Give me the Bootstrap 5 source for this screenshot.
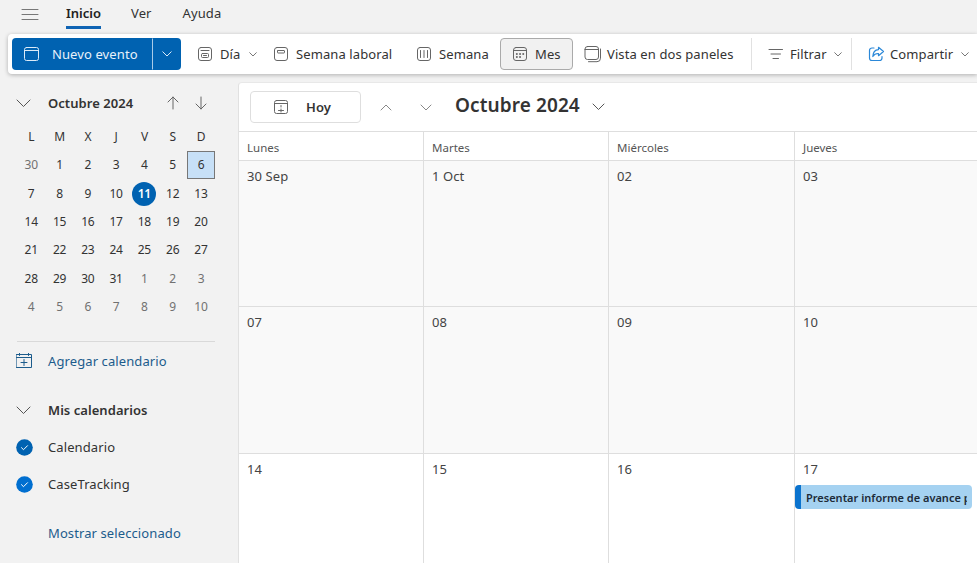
<!DOCTYPE html>
<html lang="es">
<head>
<meta charset="utf-8">
<meta name="viewport" content="width=device-width, initial-scale=1">
<title>Calendario</title>
<link href="https://cdn.jsdelivr.net/npm/bootstrap@5.3.0/dist/css/bootstrap.min.css" rel="stylesheet">
<style>
  body { font-family: "Noto Sans", "Open Sans", sans-serif; font-size: 13px; line-height: 20px; letter-spacing: .1px; color: #333; background: #f2f2f2; height: 563px; overflow: hidden; }
  svg { display: block; flex: none; fill: none; stroke: currentColor; stroke-linecap: round; stroke-linejoin: round; }
  button { color: inherit; letter-spacing: inherit; }
  .tabs { height: 34px; padding-left: 21px; }
  .menu-icon { width: 45px; color: #777; padding-top: 8px; }
  .tab { height: 29px; padding-top: 3px; }
  .tab-on { width: 35px; border-bottom: 3px solid #0f64b4; color: #222; letter-spacing: 0; }
  .tab-ver { margin-left: 30px; }
  .tab-ayuda { margin-left: 31px; }
  .ribbon { height: 40px; margin-left: 8px; padding: 4px 0 4px 4px; border-radius: 4px 0 0 4px; box-shadow: 0 1px 4px rgba(0,0,0,.28); }
  .tool { height: 32px; border: 1px solid transparent; border-radius: 4px; background: none; padding: 0 0 0 7px; display: flex; align-items: center; white-space: nowrap; flex: none; text-align: left; }
  .tool svg { color: #666; }
  .tool > span { margin-left: 7px; }
  .tool .chev { margin-left: 9px; color: #777; }
  .tool-main { width: 140px; padding-left: 11px; background: #0062b1; color: #e8f1fa; border-radius: 4px 0 0 4px; }
  .tool-main > span { margin-left: 12px; }
  .tool-main svg, .tool-split svg { color: #dcebf8; }
  .tool-split { width: 29px; background: #0062b1; border-left-color: #a9cbe8; border-radius: 0 4px 4px 0; padding-left: 9px; }
  .tool-day { width: 76px; }
  .tool-work { width: 143px; }
  .tool-week { width: 92px; }
  .tool-on { width: 73px; padding-left: 11px; border-color: #aaa; background: #f1f1f1; }
  .tool-panes { width: 178px; padding-left: 10px; }
  .tool-panes > span { margin-left: 5px; }
  .tool-filter { width: 99px; padding-left: 15px; }
  .tool-filter > span { margin-left: 6px; }
  .tool-filter .chev { margin-left: 7px; }
  .tool-share { padding-left: 15px; }
  .tool-share > span { margin-left: 5px; }
  .tool-share .chev { margin-left: 8px; }
  .tool .share-icon { color: #2b88d8; }
  .rule { width: 1px; background: #e1e1e1; height: 32px; flex: none; }
  .side { width: 238px; padding: 19px 23px 0 16px; flex: none; }
  .mini { display: grid; grid-template-columns: repeat(7, 28.3px); grid-auto-rows: 28.3px; font-size: 12px; margin: 10px 0 0 1px; justify-items: center; align-items: center; letter-spacing: -.3px; }
  .mini .out { color: #717171; }
  .mini .picked { width: 28px; height: 28px; border: 1px solid #777; background: #c7e0f7; line-height: 26px; text-align: center; }
  .mini .now { width: 24px; height: 24px; border-radius: 50%; background: #0062b1; color: #fff; font-weight: 600; line-height: 24px; text-align: center; }
  .side-line { height: 1px; background: #d9d9d9; margin: 20px 0 0 1px; }
  .side-row { display: flex; align-items: center; height: 20px; }
  .side-row > span:first-child { width: 32px; flex: none; }
  .side-row.fw-semibold { letter-spacing: .05px; }
  .row-add { margin-top: 9px; }
  .row-group { margin-top: 29px; }
  .row-cal { margin-top: 17px; }
  .row-more { margin-top: 29px; }
  .arrow-up { margin-right: 16px; }
  .arrow-down { margin-right: 8px; }
  .dim { color: #666; }
  .blue { color: #1c5c8c; }
  .board { margin-top: 8px; border-left: 1px solid #e1e1e1; border-top: 1px solid #e8e8e8; border-radius: 4px 0 0 0; min-width: 0; min-height: 0; overflow: hidden; }
  .board-head { height: 48px; padding-left: 11px; flex: none; }
  .today-btn { width: 111px; height: 32px; border: 1px solid #dedede; border-radius: 4px; background: #fff; padding: 0 0 0 23px; font-weight: 600; }
  .today-btn > span { margin-left: 18px; }
  .prev-month { margin-left: 19px; }
  .next-month { margin-left: 28px; }
  .title { font-size: 19px; font-weight: 600; line-height: 26px; width: 137px; white-space: nowrap; margin: 0 0 4px 23px; }
  .month { display: grid; grid-template-columns: 185px 185px 186px 186px; grid-template-rows: 29px 146px 147px minmax(0, 1fr); flex: 1; min-height: 0; overflow: hidden; }
  .month > div { border-top: 1px solid #dedede; border-right: 1px solid #dedede; padding: 5px 0 0 8px; color: #444; white-space: nowrap; }
  .month .head { font-size: 11.5px; padding-top: 6px; color: #555; letter-spacing: 0; }
  .month .past { background: #f9f9f9; }
  .event { width: 177px; height: 24px; margin: 6px 0 0 -8px; border-left: 6px solid #0b73ce; border-radius: 4px; background: #a5d2f1; color: #1d2b38; font-size: 11px; font-weight: 600; line-height: 25px; padding: 0 4px 0 5px; letter-spacing: 0; }
  .event > div { overflow: hidden; width: 161px; }
</style>
</head>
<body class="d-flex flex-column">
<nav class="tabs d-flex flex-shrink-0">
  <span class="menu-icon"><svg width="18" height="13" viewBox="0 0 18 13"><path d="M1 1.500h16M1 6.500h16M1 11.500h16"/></svg></span>
  <span class="tab tab-on fw-semibold">Inicio</span>
  <span class="tab tab-ver">Ver</span>
  <span class="tab tab-ayuda">Ayuda</span>
</nav>

<div class="ribbon d-flex flex-shrink-0 bg-white">
  <button class="tool tool-main"><svg width="16" height="16" viewBox="0 0 16 16"><rect x=".5" y="1.500" width="14" height="13" rx="2"/><path d="M.5 4.500h14"/></svg><span>Nuevo evento</span></button>
  <button class="tool tool-split"><svg width="10" height="6" viewBox="0 0 10 6"><path d="M.8.8 5 5 9.200.8"/></svg></button>
  <button class="tool tool-day ms-2"><svg width="16" height="16" viewBox="0 0 16 16"><rect x="1.500" y="1.500" width="13" height="13" rx="2.500"/><path d="M4 4.500h8"/><rect x="4.500" y="7.500" width="7" height="4" rx="1"/><path d="M6.500 9.500h3"/></svg><span>Día</span><svg class="chev" width="8" height="5" viewBox="0 0 8 5"><path d="M.7.7 4 4 7.300.7"/></svg></button>
  <button class="tool tool-work"><svg width="16" height="16" viewBox="0 0 16 16"><rect x="1.500" y="1.500" width="13" height="13" rx="2.500"/><rect x="4.500" y="4.500" width="7" height="2.500" rx=".5"/></svg><span>Semana laboral</span></button>
  <button class="tool tool-week"><svg width="16" height="16" viewBox="0 0 16 16"><rect x="1.500" y="1.500" width="13" height="13" rx="2.500"/><path d="M4.500 4.500v7M8 4.500v7M11.500 4.500v7"/></svg><span>Semana</span></button>
  <button class="tool tool-on"><svg width="16" height="16" viewBox="0 0 16 16"><rect x="1.500" y="1.500" width="13" height="13" rx="2.500"/><path d="M1.500 4.500h13"/><path d="M4.800 8h.1M8 8h.1M11.200 8h.1M4.800 11h.1M8 11h.1" stroke-width="1.900"/></svg><span>Mes</span></button>
  <button class="tool tool-panes"><svg width="18" height="18" viewBox="0 0 18 18"><rect x="1" y="1.500" width="13.500" height="13" rx="2.500"/><path d="M1 4.500h13.500M4.500 16.700h8.500a3.500 3.500 0 0 0 3.500-3.500V4"/></svg><span>Vista en dos paneles</span></button>
  <span class="rule"></span>
  <button class="tool tool-filter"><svg width="16" height="12" viewBox="0 0 16 12"><path d="M1 1.500h13.500M3 6h9.500M5 10.500h5.500"/></svg><span>Filtrar</span><svg class="chev" width="8" height="5" viewBox="0 0 8 5"><path d="M.7.7 4 4 7.300.7"/></svg></button>
  <span class="rule"></span>
  <button class="tool tool-share"><svg class="share-icon" width="17" height="16" viewBox="0 0 17 16"><path d="M6 2H4a2.500 2.500 0 0 0-2.500 2.500v7.500A2.500 2.500 0 0 0 4 14.500h7.500A2.500 2.500 0 0 0 14 12v-1.500M10.500 1.300l5 4.200-5 4.200V7.500C7.500 7.300 6 8.500 4.800 10.500 5 6.500 7 3.800 10.500 3.600z" stroke-width="1.200"/></svg><span>Compartir</span><svg class="chev" width="8" height="5" viewBox="0 0 8 5"><path d="M.7.7 4 4 7.300.7"/></svg></button>
</div>

<main class="d-flex flex-grow-1 overflow-hidden">
  <aside class="side">
    <div class="side-row fw-semibold"><span><svg width="15" height="9" viewBox="0 0 15 9" color="#555"><path d="M1 1l6.500 6.500L14 1"/></svg></span><span class="flex-grow-1">Octubre 2024</span>
      <svg class="arrow-up dim" width="12" height="14" viewBox="0 0 12 14"><path d="M6 13V1M1 6l5-5 5 5"/></svg><svg class="arrow-down dim" width="12" height="14" viewBox="0 0 12 14"><path d="M6 1v12M1 8l5 5 5-5"/></svg></div>
    <div class="mini">
      <span>L</span><span>M</span><span>X</span><span>J</span><span>V</span><span>S</span><span>D</span>
      <span class="out">30</span><span>1</span><span>2</span><span>3</span><span>4</span><span>5</span><span class="picked">6</span>
      <span>7</span><span>8</span><span>9</span><span>10</span><span class="now">11</span><span>12</span><span>13</span>
      <span>14</span><span>15</span><span>16</span><span>17</span><span>18</span><span>19</span><span>20</span>
      <span>21</span><span>22</span><span>23</span><span>24</span><span>25</span><span>26</span><span>27</span>
      <span>28</span><span>29</span><span>30</span><span>31</span><span class="out">1</span><span class="out">2</span><span class="out">3</span>
      <span class="out">4</span><span class="out">5</span><span class="out">6</span><span class="out">7</span><span class="out">8</span><span class="out">9</span><span class="out">10</span>
    </div>
    <div class="side-line"></div>
    <div class="side-row row-add blue"><span><svg width="17" height="16" viewBox="0 0 17 16"><path d="M.5 1.500h15v13H.5zM.5 4.500h15M3.500 0v2.500M12.500 0v2.500M8 6.500v6M5 9.500h6"/></svg></span><span>Agregar calendario</span></div>
    <div class="side-row row-group fw-semibold"><span><svg width="15" height="9" viewBox="0 0 15 9" color="#555"><path d="M1 1l6.500 6.500L14 1"/></svg></span><span>Mis calendarios</span></div>
    <div class="side-row row-cal"><span><svg width="17" height="17" viewBox="0 0 17 17"><circle cx="8.500" cy="8.500" r="8.300" fill="#0062b1" stroke="none"/><path d="M5.500 8.700l2 2 4-4" stroke="#fff"/></svg></span><span>Calendario</span></div>
    <div class="side-row row-cal"><span><svg width="17" height="17" viewBox="0 0 17 17"><circle cx="8.500" cy="8.500" r="8.300" fill="#006fd0" stroke="none"/><path d="M5.500 8.700l2 2 4-4" stroke="#fff"/></svg></span><span>CaseTracking</span></div>
    <div class="side-row row-more blue"><span></span><span>Mostrar seleccionado</span></div>
  </aside>
  <section class="board d-flex flex-column bg-white flex-grow-1">
    <div class="board-head d-flex align-items-center">
      <button class="today-btn d-flex align-items-center"><svg class="dim" width="14" height="14" viewBox="0 0 14 14"><rect x=".5" y=".5" width="13" height="13" rx="2"/><path d="M.5 3.500h13M7 5.500v1.500M7 9v3M4.500 10.500h5"/></svg><span>Hoy</span></button>
      <svg class="prev-month" width="12" height="7" viewBox="0 0 12 7" color="#888"><path d="M1 6l5-5 5 5"/></svg>
      <svg class="next-month" width="12" height="7" viewBox="0 0 12 7" color="#888"><path d="M1 1l5 5 5-5"/></svg>
      <span class="title">Octubre 2024</span>
      <svg width="13" height="8" viewBox="0 0 13 8" color="#555"><path d="M1 1l5.500 5.500L12 1"/></svg>
    </div>
    <div class="month">
      <div class="head">Lunes</div><div class="head">Martes</div><div class="head">Miércoles</div><div class="head">Jueves</div>
      <div class="past">30 Sep</div><div class="past">1 Oct</div><div class="past">02</div><div class="past">03</div>
      <div class="past">07</div><div class="past">08</div><div class="past">09</div><div class="past">10</div>
      <div>14</div><div>15</div><div>16</div><div>17<div class="event"><div>Presentar informe de avance proyecto</div></div></div>
    </div>
  </section>
</main>
<script src="https://cdn.jsdelivr.net/npm/bootstrap@5.3.0/dist/js/bootstrap.bundle.min.js"></script>
</body>
</html>
